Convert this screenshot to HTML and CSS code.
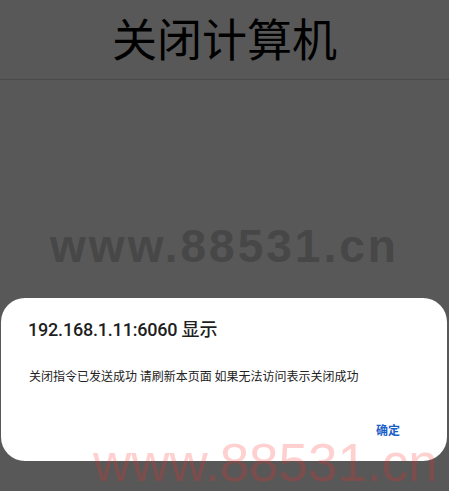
FILE: index.html
```html
<!DOCTYPE html>
<html lang="zh">
<head>
<meta charset="utf-8">
<title>关闭计算机</title>
<link rel="stylesheet" href="styles.css">
</head>
<body>
<div class="page">
  <header class="header">
    <h1 class="title">关闭计算机</h1>
  </header>
  <main class="content">
    <div class="mark">www.88531.cn</div>
  </main>
</div>
<div class="dialog">
  <div class="dialog-title">192.168.1.11:6060 显示</div>
  <div class="dialog-msg">关闭指令已发送成功 请刷新本页面 如果无法访问表示关闭成功</div>
  <div class="dialog-actions"><span class="ok">确定</span></div>
</div>
<div class="stamp">www.88531.cn</div>
</body>
</html>
```
FILE: styles.css
```css
html, body {
  margin: 0;
  padding: 0;
}
body {
  width: 449px;
  height: 491px;
  overflow: hidden;
  background: #585858;
  position: relative;
  font-family: "Noto Sans CJK SC", "Noto Sans", sans-serif;
}
.header {
  height: 79px;
  border-bottom: 1px solid #4a4a4a;
  display: flex;
  justify-content: center;
  align-items: center;
}
.title {
  margin: 0;
  font-weight: normal;
  font-size: 45px;
  line-height: 1;
  color: #000;
  padding-bottom: 4px;
  font-family: "Noto Sans CJK SC", sans-serif;
}
.content {
  padding-top: 143px;
  display: flex;
  justify-content: center;
}
.mark {
  font-family: "Liberation Sans", Arial, sans-serif;
  font-weight: bold;
  font-size: 46px;
  letter-spacing: 3px;
  line-height: 1;
  color: #474747;
}
.dialog {
  position: absolute;
  left: 1px;
  top: 298px;
  width: 446px;
  height: 163px;
  box-sizing: border-box;
  background: #fff;
  border-radius: 24px;
  padding: 20px 47px 0 27px;
  display: flex;
  flex-direction: column;
}
.dialog-title {
  font-family: "Roboto", "Noto Sans CJK SC", sans-serif;
  font-size: 18px;
  letter-spacing: -0.2px;
  line-height: 24px;
  color: #1f1f1f;
  font-weight: 500;
}
.dialog-msg {
  margin-top: 26px;
  padding-left: 1px;
  font-size: 12px;
  line-height: 16px;
  color: #222;
}
.dialog-actions {
  margin-top: 38px;
  display: flex;
  justify-content: flex-end;
}
.ok {
  font-size: 12px;
  line-height: 16px;
  font-weight: bold;
  color: #1a5fc8;
}
.stamp {
  position: absolute;
  left: 93px;
  top: 431px;
  font-family: "Liberation Sans", Arial, sans-serif;
  font-size: 53px;
  line-height: 64px;
  color: rgba(255, 40, 40, 0.22);
  white-space: nowrap;
}
```
